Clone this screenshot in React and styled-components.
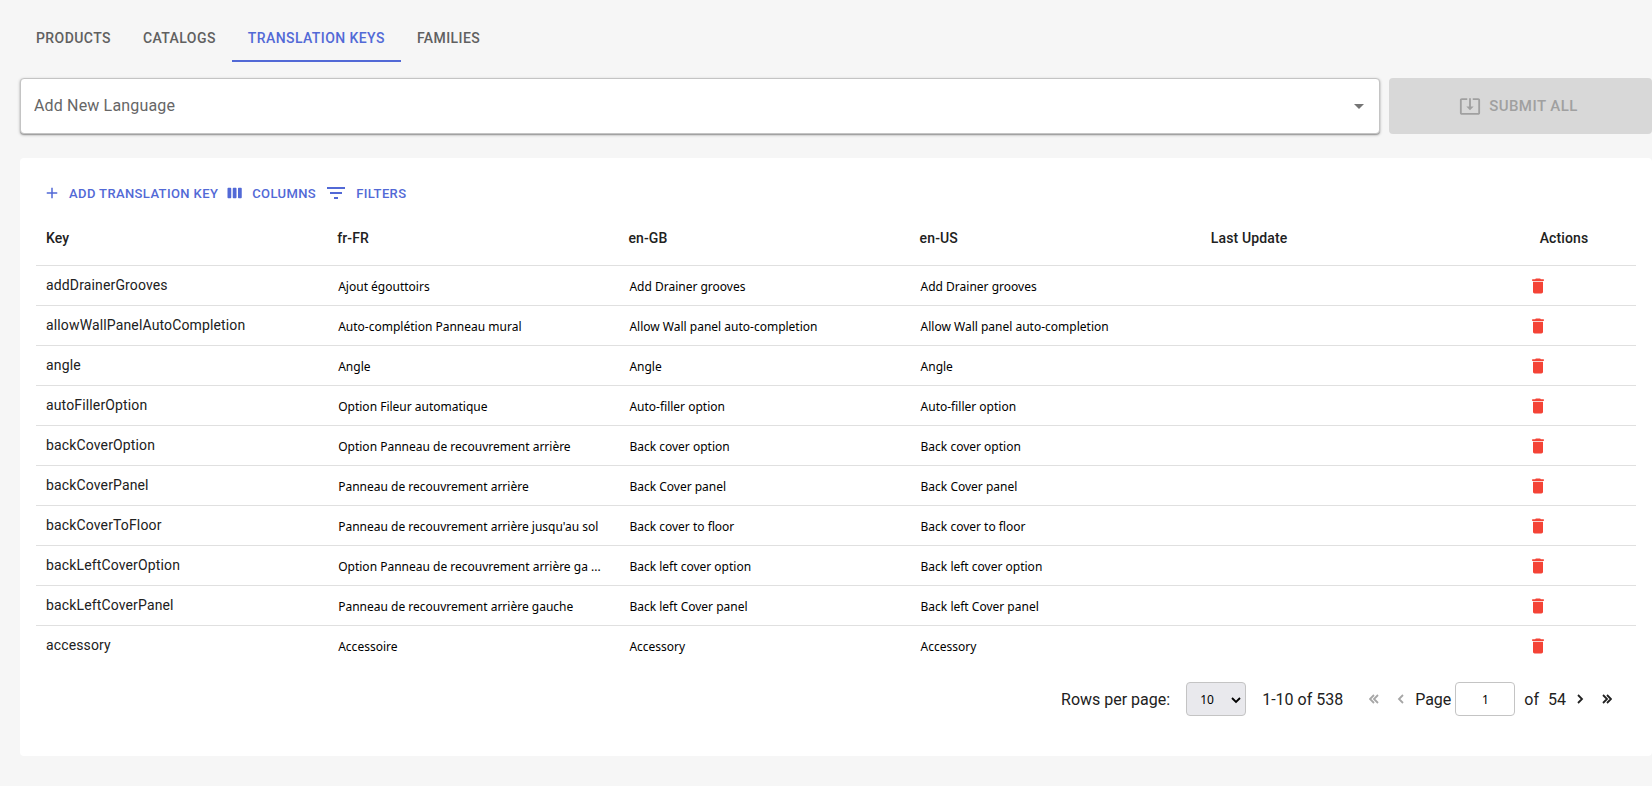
import React, { useState } from "react";
import styled, { createGlobalStyle } from "styled-components";
import {
  MdAdd,
  MdArrowDropDown,
  MdDelete,
  MdFilterList,
} from "react-icons/md";

const tabs = ["Products", "Catalogs", "Translation Keys", "Families"];

const languages = ["fr-FR", "en-GB", "en-US"];

const translations = [
  { key: "addDrainerGrooves", values: ["Ajout égouttoirs", "Add Drainer grooves", "Add Drainer grooves"] },
  { key: "allowWallPanelAutoCompletion", values: ["Auto-complétion Panneau mural", "Allow Wall panel auto-completion", "Allow Wall panel auto-completion"] },
  { key: "angle", values: ["Angle", "Angle", "Angle"] },
  { key: "autoFillerOption", values: ["Option Fileur automatique", "Auto-filler option", "Auto-filler option"] },
  { key: "backCoverOption", values: ["Option Panneau de recouvrement arrière", "Back cover option", "Back cover option"] },
  { key: "backCoverPanel", values: ["Panneau de recouvrement arrière", "Back Cover panel", "Back Cover panel"] },
  { key: "backCoverToFloor", values: ["Panneau de recouvrement arrière jusqu'au sol", "Back cover to floor", "Back cover to floor"] },
  { key: "backLeftCoverOption", values: ["Option Panneau de recouvrement arrière ga ...", "Back left cover option", "Back left cover option"] },
  { key: "backLeftCoverPanel", values: ["Panneau de recouvrement arrière gauche", "Back left Cover panel", "Back left Cover panel"] },
  { key: "accessory", values: ["Accessoire", "Accessory", "Accessory"] },
];

function SubmitIcon() {
  return (
    <svg viewBox="0 0 24 24" fill="currentColor" aria-hidden="true">
      <path d="M12 16.5l4-4h-3v-9h-2v9H8l4 4zm9-13h-6v1.99h6v14.03H3V5.49h6V3.5H3c-1.1 0-2 .9-2 2v14c0 1.1.9 2 2 2h18c1.1 0 2-.9 2-2v-14c0-1.1-.9-2-2-2z" />
    </svg>
  );
}

function ColumnsIcon() {
  return (
    <svg viewBox="0 0 24 24" width="18" height="18" fill="currentColor" aria-hidden="true">
      <path d="M6 5H3c-.55 0-1 .45-1 1v12c0 .55.45 1 1 1h3c.55 0 1-.45 1-1V6c0-.55-.45-1-1-1zm14 0h-3c-.55 0-1 .45-1 1v12c0 .55.45 1 1 1h3c.55 0 1-.45 1-1V6c0-.55-.45-1-1-1zm-7 0h-3c-.55 0-1 .45-1 1v12c0 .55.45 1 1 1h3c.55 0 1-.45 1-1V6c0-.55-.45-1-1-1z" />
    </svg>
  );
}

function SelectArrow() {
  return (
    <svg viewBox="0 0 10 10" width="10" height="10" fill="none" stroke="#000" strokeWidth="1.8" aria-hidden="true">
      <path d="M1 3l4 4 4-4" />
    </svg>
  );
}

function Chevron({ double, flip }) {
  return (
    <svg
      viewBox="0 0 10 10"
      width="10"
      height="10"
      fill="none"
      stroke="currentColor"
      strokeWidth="1.8"
      aria-hidden="true"
    >
      <g transform={flip ? "translate(10 0) scale(-1 1)" : undefined}>
        <path d={double ? "M1 1l4 4-4 4M5 1l4 4-4 4" : "M3 1l4 4-4 4"} />
      </g>
    </svg>
  );
}

export default function App() {
  const [activeTab, setActiveTab] = useState("Translation Keys");
  const [page, setPage] = useState("1");

  return (
    <Page>
      <GlobalStyle />
      <Tabs role="tablist">
        {tabs.map(tab => (
          <Tab
            key={tab}
            role="tab"
            aria-selected={tab === activeTab}
            $active={tab === activeTab}
            onClick={() => setActiveTab(tab)}
          >
            {tab}
          </Tab>
        ))}
      </Tabs>

      <LanguageBar>
        <LanguageField>
          <LanguageSelect aria-label="Add New Language" defaultValue="">
            <option value="">Add New Language</option>
          </LanguageSelect>
          <MdArrowDropDown />
        </LanguageField>
        <SubmitButton disabled>
          <SubmitIcon />
          Submit all
        </SubmitButton>
      </LanguageBar>

      <Card>
        <Toolbar>
          <ToolbarButton>
            <MdAdd size={18} />
            Add translation key
          </ToolbarButton>
          <ToolbarButton>
            <ColumnsIcon />
            Columns
          </ToolbarButton>
          <ToolbarButton>
            <MdFilterList size={24} />
            Filters
          </ToolbarButton>
        </Toolbar>

        <Table>
          <thead>
            <tr>
              <HeadCell>Key</HeadCell>
              {languages.map(language => (
                <HeadCell key={language}>{language}</HeadCell>
              ))}
              <HeadCell>Last Update</HeadCell>
              <HeadCell $actions>Actions</HeadCell>
            </tr>
          </thead>
          <tbody>
            {translations.map(({ key, values }) => (
              <Row key={key}>
                <KeyCell>{key}</KeyCell>
                {values.map((value, index) => (
                  <ValueCell key={languages[index]}>{value}</ValueCell>
                ))}
                <KeyCell />
                <ActionCell>
                  <DeleteButton aria-label={"Delete " + key}>
                    <MdDelete />
                  </DeleteButton>
                </ActionCell>
              </Row>
            ))}
          </tbody>
        </Table>

        <Pagination>
          <label htmlFor="rows-per-page">Rows per page:</label>
          <RowsField>
            <RowsSelect id="rows-per-page" defaultValue="10">
              <option>10</option>
              <option>25</option>
              <option>50</option>
            </RowsSelect>
            <SelectArrow />
          </RowsField>
          <span>1-10 of 538</span>
          <Pager>
            <PagerButton aria-label="First page" $wide disabled>
              <Chevron double flip />
            </PagerButton>
            <PagerButton aria-label="Previous page" disabled>
              <Chevron flip />
            </PagerButton>
            <label htmlFor="page-number">Page</label>
            <PageInput id="page-number" value={page} onChange={e => setPage(e.target.value)} />
            <PageOf>of</PageOf>
            <span>54</span>
            <PagerButton aria-label="Next page">
              <Chevron />
            </PagerButton>
            <PagerButton aria-label="Last page" $wide>
              <Chevron double />
            </PagerButton>
          </Pager>
        </Pagination>
      </Card>
    </Page>
  );
}

const GlobalStyle = createGlobalStyle`
  * {
    box-sizing: border-box;
  }
  body {
    margin: 0;
    background-color: #f6f6f6;
    color: #212121;
    font-family: Roboto, sans-serif;
    font-size: 16px;
  }
  button, input, select {
    margin: 0;
    font-family: inherit;
  }
  button {
    padding: 0;
    border: none;
    background: none;
    cursor: pointer;
  }
`;

const Page = styled.main`
  padding: 14px 0 30px 20px;
`;

const Tabs = styled.div`
  display: flex;
  margin-bottom: 16px;
`;

const Tab = styled.button`
  height: 48px;
  padding: 0 16px;
  box-shadow: inset 0 -2px ${({ $active }) => ($active ? "#5269d6" : "transparent")};
  color: ${({ $active }) => ($active ? "#5269d6" : "#606060")};
  font-size: 14px;
  font-weight: 500;
  letter-spacing: 0.03em;
  text-transform: uppercase;
`;

const LanguageBar = styled.div`
  display: flex;
  gap: 9px;
  height: 56px;
  margin-bottom: 24px;
`;

const LanguageField = styled.div`
  position: relative;
  flex: 1;
  svg {
    position: absolute;
    top: 16px;
    right: 9px;
    width: 24px;
    height: 24px;
    color: #757575;
    pointer-events: none;
  }
`;

const LanguageSelect = styled.select`
  width: 100%;
  height: 100%;
  padding: 0 32px 2px 13px;
  border: 1px solid #c4c4c4;
  border-radius: 4px;
  background-color: #fff;
  box-shadow: 0 1px 3px rgba(0, 0, 0, 0.3), 0 1px 1px rgba(0, 0, 0, 0.2);
  color: #666;
  font-size: 16px;
  letter-spacing: 0.01em;
  appearance: none;
`;

const SubmitButton = styled.button`
  display: flex;
  align-items: center;
  justify-content: center;
  gap: 8px;
  width: 263px;
  border-radius: 4px;
  background-color: #d8d8d8;
  color: #a0a0a0;
  font-size: 15px;
  font-weight: 500;
  letter-spacing: 0.03em;
  text-transform: uppercase;
  svg {
    width: 22px;
    height: 22px;
    margin-left: -4px;
  }
`;

const Card = styled.section`
  padding: 19px 16px 40px;
  border-radius: 4px;
  background-color: #fff;
`;

const Toolbar = styled.div`
  display: flex;
  gap: 8px;
  padding-left: 7px;
`;

const ToolbarButton = styled.button`
  display: flex;
  align-items: center;
  gap: 8px;
  height: 32px;
  color: #5269d6;
  font-size: 13px;
  font-weight: 500;
  letter-spacing: 0.03em;
  text-transform: uppercase;
`;

const Table = styled.table`
  width: 100%;
  border-collapse: collapse;
  table-layout: fixed;
`;

const HeadCell = styled.th`
  width: ${({ $actions }) => ($actions ? "9%" : "auto")};
  height: 56px;
  padding: 2px 10px 0;
  border-bottom: 1px solid #e0e0e0;
  font-size: 14px;
  font-weight: 500;
  letter-spacing: 0.01em;
  text-align: ${({ $actions }) => ($actions ? "center" : "left")};
`;

const Row = styled.tr`
  border-bottom: 1px solid #e0e0e0;
  &:last-child {
    border-bottom: none;
  }
`;

const KeyCell = styled.td`
  height: 40px;
  padding: 0 10px 1px;
  font-size: 14px;
  letter-spacing: 0.01em;
`;

const ValueCell = styled.td`
  padding: 2px 11px 0;
  color: #000;
  font-family: "Noto Sans", sans-serif;
  font-size: 12px;
  white-space: nowrap;
`;

const ActionCell = styled.td`
  padding: 2px 36px 0;
`;

const DeleteButton = styled.button`
  display: flex;
  color: #f44336;
  font-size: 20px;
`;

const Pagination = styled.div`
  display: flex;
  align-items: center;
  justify-content: flex-end;
  gap: 16px;
  padding: 17px 16px 0 0;
`;

const RowsField = styled.div`
  position: relative;
  svg {
    position: absolute;
    top: 13px;
    right: 5px;
    pointer-events: none;
  }
`;

const RowsSelect = styled.select`
  width: 60px;
  height: 34px;
  padding: 0 13px;
  border: 1px solid #c4c4c4;
  border-radius: 4px;
  background-color: #e9e9ed;
  color: #000;
  font-family: "Noto Sans", sans-serif;
  font-size: 12px;
  appearance: none;
`;

const Pager = styled.div`
  display: flex;
  align-items: center;
  gap: 4px;
  padding-left: 2px;
`;

const PagerButton = styled.button`
  display: flex;
  align-items: center;
  justify-content: center;
  width: ${({ $wide }) => ($wide ? "26px" : "20px")};
  height: 24px;
  color: #212121;
  &:disabled {
    color: #a6a6a6;
  }
`;

const PageInput = styled.input`
  width: 60px;
  height: 34px;
  border: 1px solid #c4c4c4;
  border-radius: 4px;
  color: #000;
  font-family: "Noto Sans", sans-serif;
  font-size: 12px;
  text-align: center;
`;

const PageOf = styled.span`
  padding: 0 5px;
`;
